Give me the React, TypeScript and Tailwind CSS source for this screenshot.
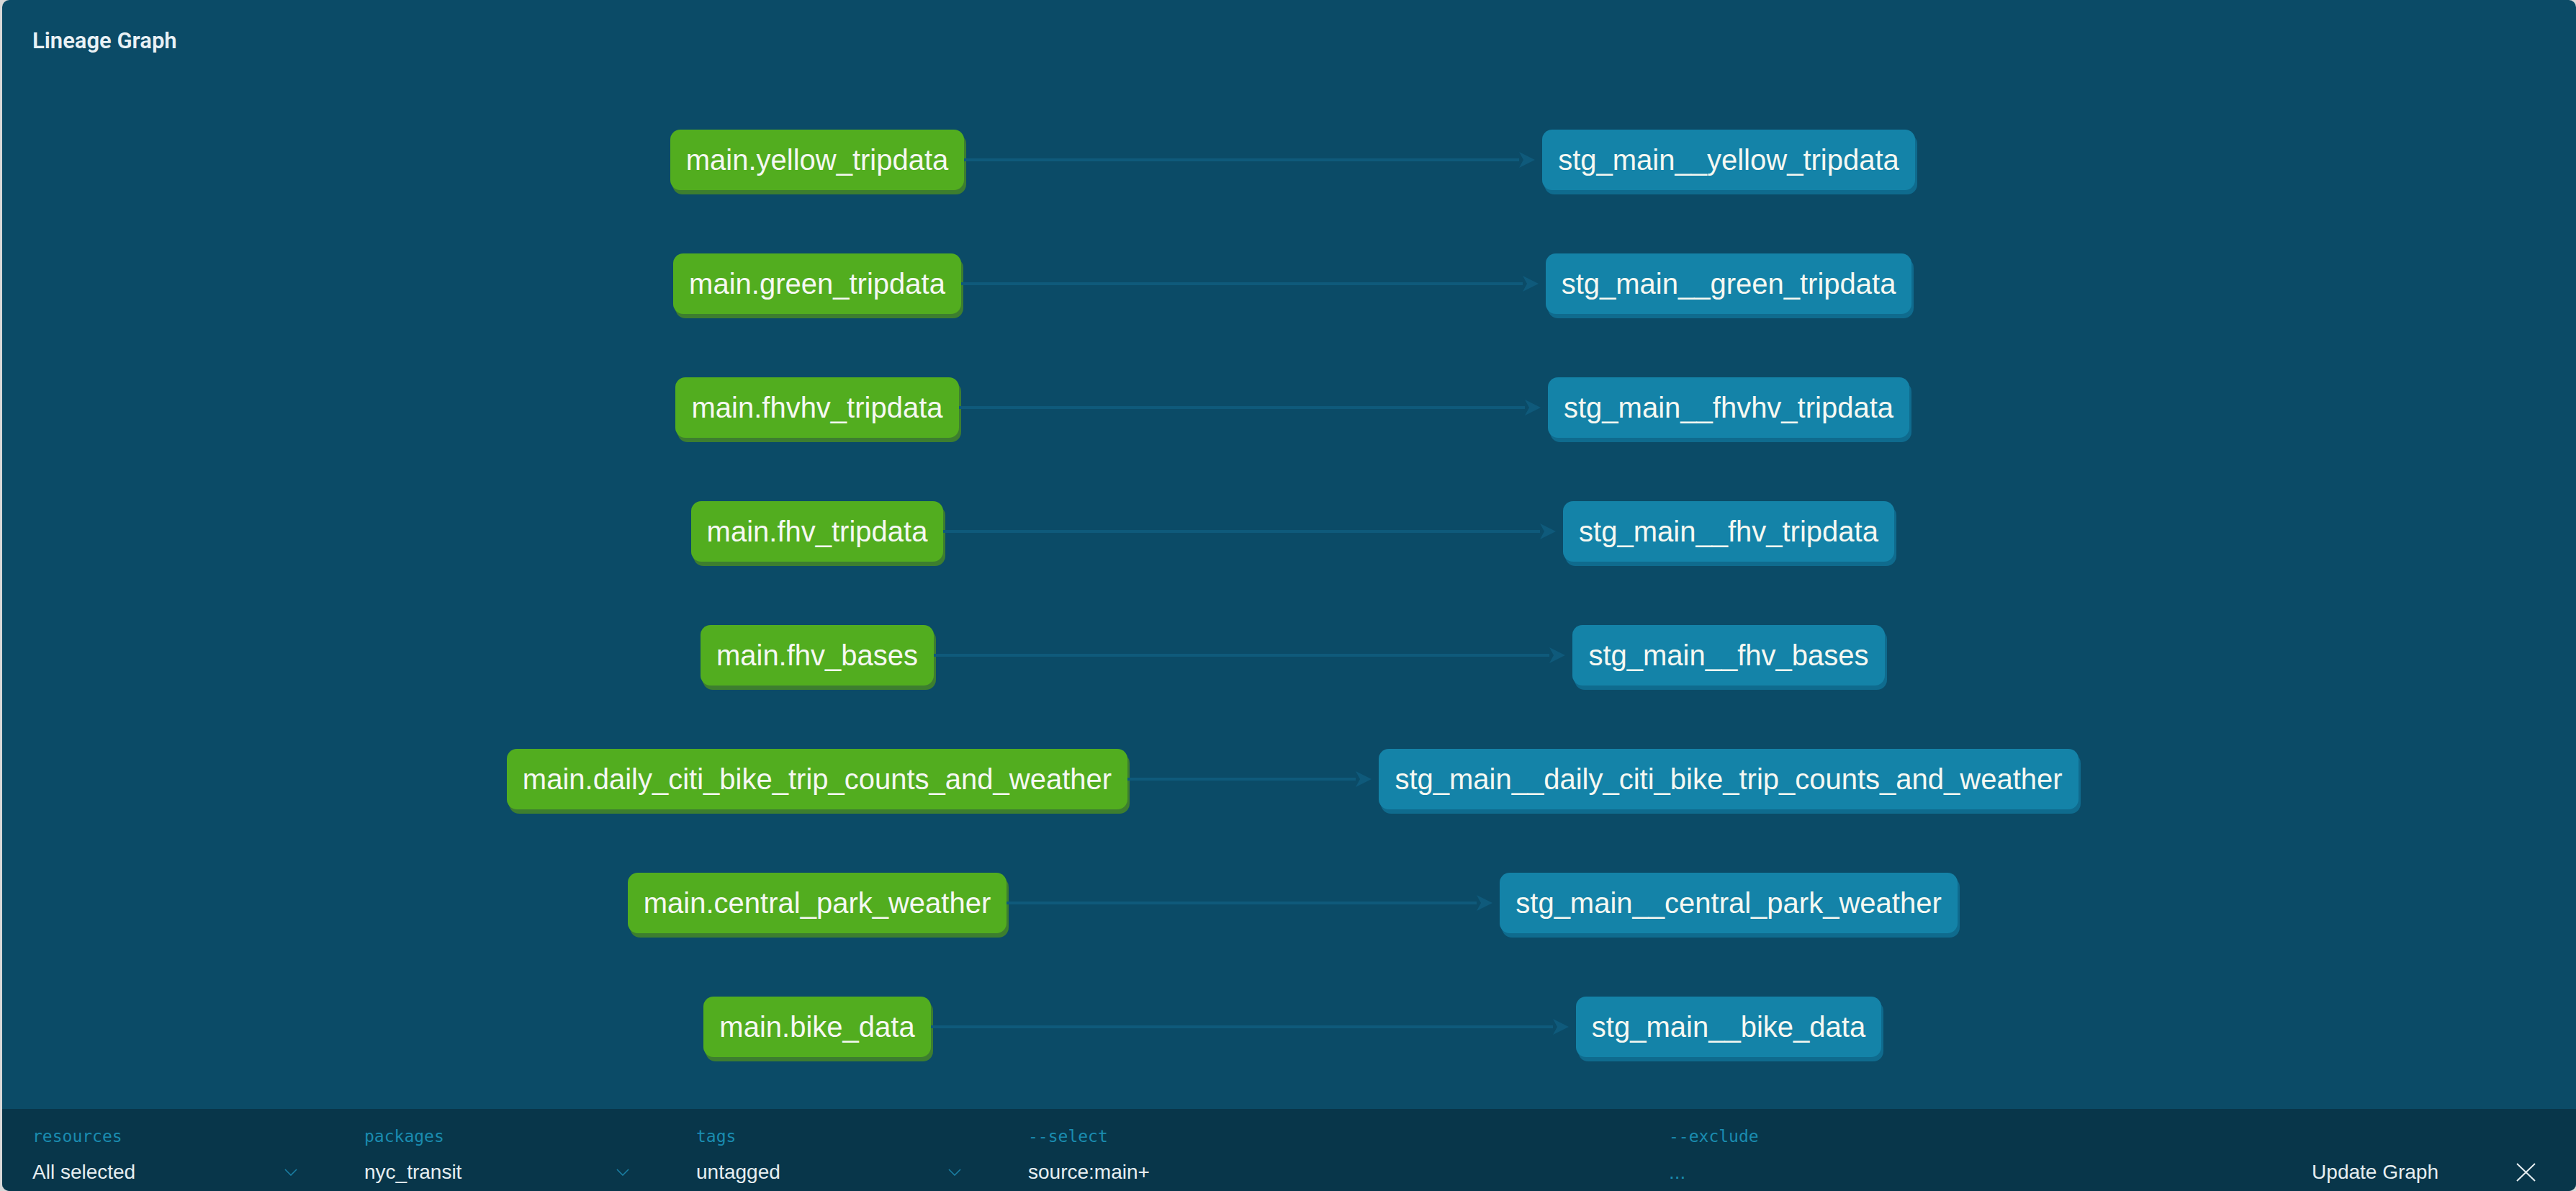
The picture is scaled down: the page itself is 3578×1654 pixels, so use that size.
import clsx from "clsx";

const rows: [string, string][] = [
  ["main.yellow_tripdata", "stg_main__yellow_tripdata"],
  ["main.green_tripdata", "stg_main__green_tripdata"],
  ["main.fhvhv_tripdata", "stg_main__fhvhv_tripdata"],
  ["main.fhv_tripdata", "stg_main__fhv_tripdata"],
  ["main.fhv_bases", "stg_main__fhv_bases"],
  ["main.daily_citi_bike_trip_counts_and_weather", "stg_main__daily_citi_bike_trip_counts_and_weather"],
  ["main.central_park_weather", "stg_main__central_park_weather"],
  ["main.bike_data", "stg_main__bike_data"],
];

function Node({ label, kind }: { label: string; kind: "source" | "model" }) {
  return (
    <div
      className={clsx(
        "h-[84px] shrink-0 rounded-[14px] px-[22px] flex items-center whitespace-nowrap text-[40px] leading-none text-[#f5f8f2]",
        kind === "source"
          ? "bg-[#52ad1f] shadow-[3px_6px_0_#3d7e2f]"
          : "bg-[#1483a8] shadow-[3px_6px_0_#0f6b8e]"
      )}
    >
      {label}
    </div>
  );
}

function ArrowHead() {
  return (
    <svg width="22" height="22" viewBox="0 0 22 22" className="shrink-0">
      <path d="M0 0 L22 11 L0 22 L6 11 Z" fill="#0f5a7b" />
    </svg>
  );
}

function Chevron() {
  return (
    <svg width="18" height="10" viewBox="0 0 18 10" className="shrink-0">
      <path d="M1 1 L9 9 L17 1" fill="none" stroke="#1a7fa3" strokeWidth="1.6" />
    </svg>
  );
}

function Dropdown({ label, value }: { label: string; value: string }) {
  return (
    <div className="w-[461px] shrink-0">
      <div className="h-[28px] leading-[28px] text-[23px] text-[#1a8cb0] font-['DejaVu_Sans_Mono',monospace]">
        {label}
      </div>
      <div className="mt-[18px] h-[36px] w-[368px] flex items-center justify-between">
        <span className="text-[28px] text-[#e6eef1]">{value}</span>
        <Chevron />
      </div>
    </div>
  );
}

export default function App() {
  return (
    <div className="h-screen w-full bg-[#d8d8d8] pl-[3px] font-['Liberation_Sans',Arial,sans-serif]">
      <div className="h-full rounded-[10px] overflow-hidden bg-[#0b4b67] flex flex-col">
        <div className="h-[114px] shrink-0 px-[42px] flex items-center">
          <h1 className="text-[31px] font-semibold text-[#e9f1f5] font-['Roboto',sans-serif]">Lineage Graph</h1>
        </div>

        <div className="flex-1 pt-[66px] flex flex-col gap-[88px]">
          {rows.map(([src, model]) => (
            <div key={src} className="h-[84px] pl-[499px] flex">
              <div className="w-[1266px] flex items-center">
                <div className="flex-1" />
                <Node label={src} kind="source" />
                <div className="flex-1 h-[4px] bg-[#0f5a7b]" />
              </div>
              <div className="w-[1266px] flex items-center">
                <div className="flex-1 flex items-center">
                  <div className="flex-1 h-[4px] bg-[#0f5a7b]" />
                  <ArrowHead />
                  <div className="w-[10px] shrink-0" />
                </div>
                <Node label={model} kind="model" />
                <div className="flex-1" />
              </div>
            </div>
          ))}
        </div>

        <div className="h-[114px] shrink-0 bg-[#08364a] pl-[42px] pr-[56px] pt-[24px] flex">
          <Dropdown label="resources" value="All selected" />
          <Dropdown label="packages" value="nyc_transit" />
          <Dropdown label="tags" value="untagged" />
          <div className="w-[890px] shrink-0">
            <div className="h-[28px] leading-[28px] text-[23px] text-[#1a8cb0] font-['DejaVu_Sans_Mono',monospace]">
              --select
            </div>
            <div className="mt-[18px] h-[36px] flex items-center text-[28px] text-[#e6eef1]">source:main+</div>
          </div>
          <div className="flex-1">
            <div className="h-[28px] leading-[28px] text-[23px] text-[#1a8cb0] font-['DejaVu_Sans_Mono',monospace]">
              --exclude
            </div>
            <div className="mt-[18px] h-[36px] flex items-center text-[28px] text-[#1a8cb0]">...</div>
          </div>
          <div className="mt-[46px] h-[36px] flex items-center gap-[108px]">
            <button className="text-[28px] text-[#e6eef1]">Update Graph</button>
            <svg width="27" height="26" viewBox="0 0 27 26" className="shrink-0">
              <path d="M1 1 L26 25 M26 1 L1 25" stroke="#e6eef1" strokeWidth="2" fill="none" />
            </svg>
          </div>
        </div>
      </div>
    </div>
  );
}
